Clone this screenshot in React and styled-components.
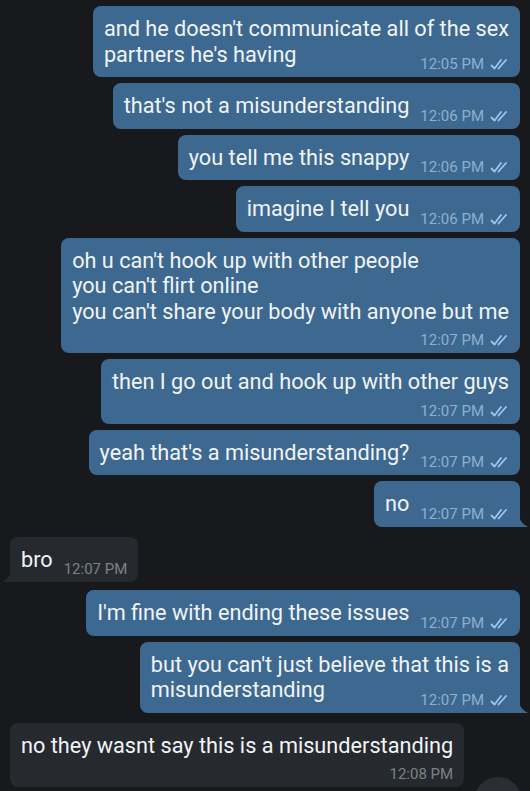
import React from "react";
import styled, { createGlobalStyle, css } from "styled-components";

const messages = [
  { out: true, lines: ["and he doesn't communicate all of the sex", "partners he's having"], time: "12:05 PM" },
  { out: true, lines: ["that's not a misunderstanding"], time: "12:06 PM" },
  { out: true, lines: ["you tell me this snappy"], time: "12:06 PM" },
  { out: true, lines: ["imagine I tell you"], time: "12:06 PM" },
  {
    out: true,
    lines: ["oh u can't hook up with other people", "you can't flirt online", "you can't share your body with anyone but me"],
    time: "12:07 PM",
    below: true,
  },
  { out: true, lines: ["then I go out and hook up with other guys"], time: "12:07 PM", below: true },
  { out: true, lines: ["yeah that's a misunderstanding?"], time: "12:07 PM" },
  { out: true, lines: ["no"], time: "12:07 PM", tail: true },
  { out: false, lines: ["bro"], time: "12:07 PM", tail: true, gap: 10 },
  { out: true, lines: ["I'm fine with ending these issues"], time: "12:07 PM", gap: 8 },
  { out: true, lines: ["but you can't just believe that this is a", "misunderstanding"], time: "12:07 PM", tail: true },
  { out: false, lines: ["no they wasnt say this is a misunderstanding"], time: "12:08 PM", below: true, gap: 10 },
];

const GlobalStyle = createGlobalStyle`
  body {
    margin: 0;
    background: #18191c;
    font-family: Roboto, "Liberation Sans", sans-serif;
  }
`;

const Screen = styled.div`
  position: relative;
  width: 530px;
  height: 791px;
  overflow: hidden;
  background: #18191c;
`;

const Feed = styled.div`
  display: flex;
  flex-direction: column;
  padding: 6px 10px 0 10px;
`;

const Row = styled.div`
  display: flex;
  justify-content: ${(p) => (p.$out ? "flex-end" : "flex-start")};
  margin-top: ${(p) => p.$gap}px;
`;

const Bubble = styled.div`
  position: relative;
  display: flex;
  flex-direction: column;
  padding: 10px 11px 4px 11px;
  border-radius: 8px;
  background: ${(p) => (p.$out ? "#3d6991" : "#262a2f")};
  color: #f1f4f7;
  ${(p) =>
    p.$tail &&
    (p.$out
      ? css`
          border-bottom-right-radius: 0;
        `
      : css`
          border-bottom-left-radius: 0;
        `)}
`;

const Line = styled.div`
  font-size: 21.7px;
  line-height: 25.5px;
  white-space: nowrap;
`;

const LastRow = styled.div`
  display: flex;
  align-items: flex-start;
  justify-content: space-between;
  gap: 11px;
`;

const Meta = styled.div`
  display: flex;
  align-items: center;
  gap: 6px;
  align-self: flex-end;
  margin-top: ${(p) => (p.$below ? "7px" : "13.5px")};
  margin-right: ${(p) => (p.$out ? "1px" : "0")};
  font-size: 15px;
  line-height: 18px;
  white-space: nowrap;
  color: ${(p) => (p.$out ? "#8db0cf" : "#7c8188")};
`;

const Tail = styled.svg`
  position: absolute;
  bottom: 0;
  width: 9px;
  height: 14px;
  ${(p) =>
    p.$out
      ? css`
          right: -8px;
        `
      : css`
          left: -8px;
          transform: scaleX(-1);
        `}
`;

const ScrollButton = styled.div`
  position: absolute;
  right: 8px;
  bottom: -34px;
  width: 48px;
  height: 48px;
  border-radius: 50%;
  background: #2a2d32;
`;

function Checks() {
  return (
    <svg width="18" height="12" viewBox="0 0 18 12" fill="none" stroke="#9cc7ee" strokeWidth="1.8" strokeLinecap="round" strokeLinejoin="round">
      <path d="M1.5 7.5 L4.5 10.5 L11 2" />
      <path d="M8.5 10.5 L16 2" />
    </svg>
  );
}

function Message({ msg }) {
  const meta = (
    <Meta $out={msg.out} $below={msg.below}>
      {msg.time}
      {msg.out && <Checks />}
    </Meta>
  );
  const head = msg.below ? msg.lines : msg.lines.slice(0, -1);
  const last = msg.lines[msg.lines.length - 1];
  return (
    <Bubble $out={msg.out} $tail={msg.tail}>
      {head.map((l, i) => (
        <Line key={i}>{l}</Line>
      ))}
      {msg.below ? (
        meta
      ) : (
        <LastRow>
          <Line>{last}</Line>
          {meta}
        </LastRow>
      )}
      {msg.tail && (
        <Tail $out={msg.out} viewBox="0 0 9 14">
          <path d="M0 0 C0 7 3 11 9 14 L0 14 Z" fill={msg.out ? "#3d6991" : "#262a2f"} />
        </Tail>
      )}
    </Bubble>
  );
}

export default function App() {
  return (
    <>
      <GlobalStyle />
      <Screen>
        <Feed>
          {messages.map((m, i) => (
            <Row key={i} $out={m.out} $gap={i === 0 ? 0 : m.gap ?? 6}>
              <Message msg={m} />
            </Row>
          ))}
        </Feed>
        <ScrollButton />
      </Screen>
    </>
  );
}
